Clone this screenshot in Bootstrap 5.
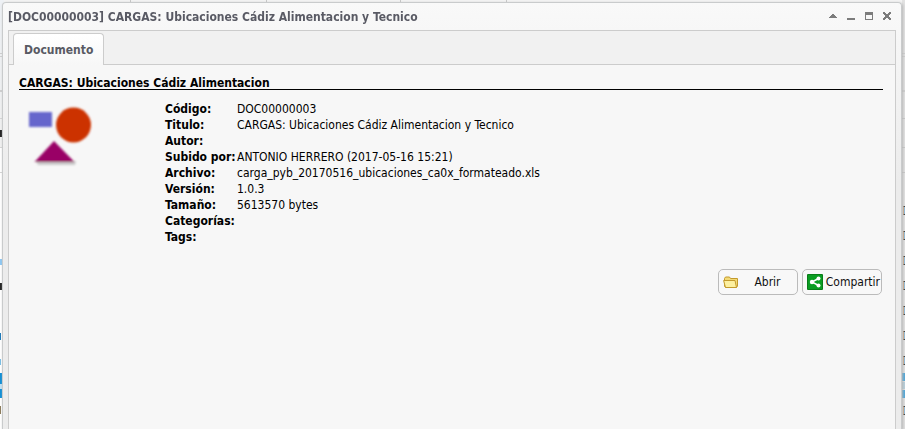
<!DOCTYPE html>
<html lang="es">
<head>
<meta charset="utf-8">
<meta name="viewport" content="width=device-width, initial-scale=1">
<title>[DOC00000003] CARGAS: Ubicaciones Cádiz Alimentacion y Tecnico</title>
<link rel="stylesheet" href="https://cdn.jsdelivr.net/npm/bootstrap@5.3.0/dist/css/bootstrap.min.css">
<style>
body{background:#fff;font-family:"DejaVu Sans Condensed","DejaVu Sans",Tahoma,sans-serif;font-size:12px;line-height:16px;color:#000}
/* grid page that shows around the window */
.backdrop{z-index:0;overflow:hidden}
.head-cells{height:8px;background:#f4f4f4}
.head-cells span{border-right:1px solid #c8c8c8;width:136px}
.head-cells span:first-child{width:127px}
.head-cells span:nth-child(3){width:134px}
.head-cells span:nth-child(4){width:106px}
.edge-l{width:4px;background:
 linear-gradient(#cfcfcf,#cfcfcf) 0 53px/4px 1px no-repeat,
 linear-gradient(#cfcfcf,#cfcfcf) 0 56px/4px 1px no-repeat,
 linear-gradient(#cfcfcf,#cfcfcf) 0 90px/4px 2px no-repeat,
 linear-gradient(#d5d5d5,#d5d5d5) 0 118px/4px 1px no-repeat,
 linear-gradient(#222,#222) 0 130px/2px 7px no-repeat,
 linear-gradient(#d5d5d5,#d5d5d5) 0 147px/4px 1px no-repeat,
 linear-gradient(#d5d5d5,#d5d5d5) 0 172px/4px 1px no-repeat,
 linear-gradient(#8cc8f4,#8cc8f4) 0 259px/2px 6px no-repeat,
 linear-gradient(#222,#222) 0 283px/2px 7px no-repeat,
 linear-gradient(#1a78b8,#1a78b8) 0 333px/1px 7px no-repeat,
 linear-gradient(#79bde4,#79bde4) 0 359px/1px 6px no-repeat,
 linear-gradient(#bfe2f6,#bfe2f6) 0 384px/2px 5px no-repeat,
 linear-gradient(#0e8ed6,#0e8ed6) 0 373px/4px 25px no-repeat,
 linear-gradient(#8a7a5a,#8a7a5a) 0 406px/1px 8px no-repeat,
 linear-gradient(#eef1f5,#f1f1f1) 0 0/4px 147px no-repeat,#fff}
.edge-r{width:3px;background:
 linear-gradient(#cfcfcf,#cfcfcf) 0 53px/3px 1px no-repeat,
 linear-gradient(#cfcfcf,#cfcfcf) 0 56px/3px 1px no-repeat,
 linear-gradient(#cfcfcf,#cfcfcf) 0 90px/3px 2px no-repeat,
 linear-gradient(#c8c8c8,#c8c8c8) 0 118px/3px 1px no-repeat,
 linear-gradient(#c8c8c8,#c8c8c8) 0 147px/3px 1px no-repeat,
 linear-gradient(#c8c8c8,#c8c8c8) 0 172px/3px 1px no-repeat,
 linear-gradient(#4aa5d8,#4aa5d8) 0 373px/3px 8px no-repeat,
 linear-gradient(#b5cfdb,#b5cfdb) 0 382px/3px 7px no-repeat,
 linear-gradient(#4aa5d8,#4aa5d8) 0 390px/3px 8px no-repeat,#e2e2e2}
.tick{width:2px;height:9px;margin-bottom:16px;flex:none;background:#8fbbd9;border-left:1px solid #d0a57c;border-top:1px solid #333;border-bottom:1px solid #333}
.ticks{padding-top:206px}
.tick:nth-child(7){margin-bottom:41px}
.win{z-index:1;margin:2px 3px 0 2px;min-height:calc(100vh - 2px);border:1px solid #c9cbcc;border-bottom:0;border-radius:4px 4px 0 0;padding:0 5px;background:linear-gradient(#f9f9f9 0,#f7f7f7 27px,#ececec 180px);box-shadow:1px 1px 3px #b5b5b5}
.win-title{height:27px}
.win-title h1{font-size:12px;line-height:16px;font-weight:700;color:#595a64}
.tool{border:0;background:none;padding:0;width:10px;height:10px;line-height:0;color:#7c7c7c}
.tools{gap:8px;padding-right:4px;padding-bottom:2px}
.tool svg{display:block}
.panel{border:1px solid #ccc;border-bottom:0;background:#f7f7f7}
.tabstrip{height:34px;background:#f1f1f1;border-bottom:1px solid #ccc;padding:2px 4px 0}
.tabstrip .nav-link{height:32px;margin-bottom:-1px;padding:8px 10px;border:1px solid #ccc;border-bottom:0;border-radius:4px 4px 0 0;background:linear-gradient(#fff,#f7f7f7);font-weight:700;line-height:16px;color:#595a64}
.pane{padding:12px 12px 10px 10px}
.pane h2{font-size:12px;line-height:12px;font-weight:700;border-bottom:1px solid #000}
.thumb{width:146px;padding:5px 0 0 6px}
.meta{margin-top:11px}
.meta th,.meta td{padding:0;white-space:nowrap;text-align:left}
.meta th{min-width:72px;width:72px;max-width:72px}
.actions{gap:4px;margin-top:24px;padding-right:1px}
.actions .btn{width:80px;height:26px;padding:0 1px 0 4px;border:1px solid #bbb;border-radius:5px;background:#f8f8f8;font-size:12px;line-height:16px;color:#111}
.actions .btn:hover{background:#eee}
.actions .btn svg{margin-bottom:1px}
</style>
</head>
<body>
<div class="backdrop position-fixed top-0 start-0 w-100 h-100 d-flex" aria-hidden="true">
  <div class="edge-l"></div>
  <div class="head-cells flex-grow-1 d-flex"><span></span><span></span><span></span><span></span></div>
  <div class="edge-r"><div class="ticks d-flex flex-column align-items-end"><i class="tick"></i><i class="tick"></i><i class="tick"></i><i class="tick"></i><i class="tick"></i><i class="tick"></i><i class="tick"></i><i class="tick"></i></div></div>
</div>

<main class="win position-relative d-flex flex-column">
  <header class="win-title d-flex align-items-center justify-content-between">
    <h1 class="m-0 text-nowrap">[DOC00000003] CARGAS: Ubicaciones Cádiz Alimentacion y Tecnico</h1>
    <div class="tools d-flex">
      <button type="button" class="tool" aria-label="Contraer"><svg width="10" height="10" shape-rendering="crispEdges" fill="currentColor"><path d="M4 3h2v1h1v1h1v1h1v1H1V6h1V5h1V4h1z"/></svg></button>
      <button type="button" class="tool" aria-label="Minimizar"><svg width="10" height="10"><path d="M1 7h8v2H1z" fill="currentColor"/></svg></button>
      <button type="button" class="tool" aria-label="Maximizar"><svg width="10" height="10"><path fill-rule="evenodd" d="M1 1h8v8H1zM2 4v4h6V4z" fill="currentColor"/></svg></button>
      <button type="button" class="tool" aria-label="Cerrar"><svg width="10" height="10" shape-rendering="crispEdges"><path d="M1 1h2v1h1v1h2V2h1V1h2v2H8v1H7v2h1v1h1v2H7V8H6V7H4v1H3v1H1V7h1V6h1V4H2V3H1z" fill="currentColor"/></svg></button>
    </div>
  </header>

  <section class="panel flex-grow-1">
    <div class="tabstrip nav" role="tablist">
      <button type="button" class="nav-link active" role="tab" id="tab-doc" aria-controls="pane-doc" aria-selected="true">Documento</button>
    </div>
    <div class="pane" id="pane-doc" role="tabpanel" aria-labelledby="tab-doc">
      <h2 class="m-0">CARGAS: Ubicaciones Cádiz Alimentacion</h2>
      <div class="d-flex">
        <div class="thumb flex-shrink-0">
          <svg width="72" height="76" role="img" aria-label="Tipo de documento">
            <defs><filter id="soft"><feGaussianBlur stdDeviation=".8"/></filter></defs>
            <g filter="url(#soft)">
              <path d="M11 66l2 4h37l1-4z" fill="#c9c9c9"/>
              <rect x="4" y="17" width="23" height="15" fill="#66c"/>
              <circle cx="48.500" cy="30" r="17.500" fill="#c30"/>
              <path d="M29 46L49.500 67h-40z" fill="#906"/>
            </g>
          </svg>
        </div>
        <table class="meta">
          <tbody>
            <tr><th scope="row">Código:</th><td>DOC00000003</td></tr>
            <tr><th scope="row">Titulo:</th><td>CARGAS: Ubicaciones Cádiz Alimentacion y Tecnico</td></tr>
            <tr><th scope="row">Autor:</th><td></td></tr>
            <tr><th scope="row">Subido por:</th><td>ANTONIO HERRERO (2017-05-16 15:21)</td></tr>
            <tr><th scope="row">Archivo:</th><td>carga_pyb_20170516_ubicaciones_ca0x_formateado.xls</td></tr>
            <tr><th scope="row">Versión:</th><td>1.0.3</td></tr>
            <tr><th scope="row">Tamaño:</th><td>5613570 bytes</td></tr>
            <tr><th scope="row">Categorías:</th><td></td></tr>
            <tr><th scope="row">Tags:</th><td></td></tr>
          </tbody>
        </table>
      </div>
      <div class="actions d-flex justify-content-end">
        <button type="button" class="btn d-flex align-items-center">
          <svg width="16" height="16" class="flex-shrink-0" aria-hidden="true"><path d="M2.500 13.500L1.500 12V4.500L2.500 3H6.500l1 1.500h7V12l-1 1.500z" fill="#f3da76" stroke="#c39a2c"/><path d="M.6 6.500h11.400L13.500 13.500h-11z" fill="#fdf0a0" stroke="#c39a2c"/></svg>
          <span class="flex-grow-1 text-center">Abrir</span>
        </button>
        <button type="button" class="btn d-flex align-items-center">
          <svg width="16" height="16" class="flex-shrink-0" aria-hidden="true"><rect width="16" height="16" rx="1" fill="#087d18"/><rect x="1" y="1" width="14" height="14" fill="#0a9d22"/><path d="M11.500 4.500L5 8l6.500 3.500" fill="none" stroke="#fff" stroke-width="1.500"/><g fill="#fff"><circle cx="11.500" cy="4.500" r="2"/><circle cx="5" cy="8" r="2.200"/><circle cx="11.500" cy="11.500" r="2"/></g></svg>
          <span class="flex-grow-1 text-end">Compartir</span>
        </button>
      </div>
    </div>
  </section>
</main>
<script src="https://cdn.jsdelivr.net/npm/bootstrap@5.3.0/dist/js/bootstrap.bundle.min.js"></script>
</body>
</html>
